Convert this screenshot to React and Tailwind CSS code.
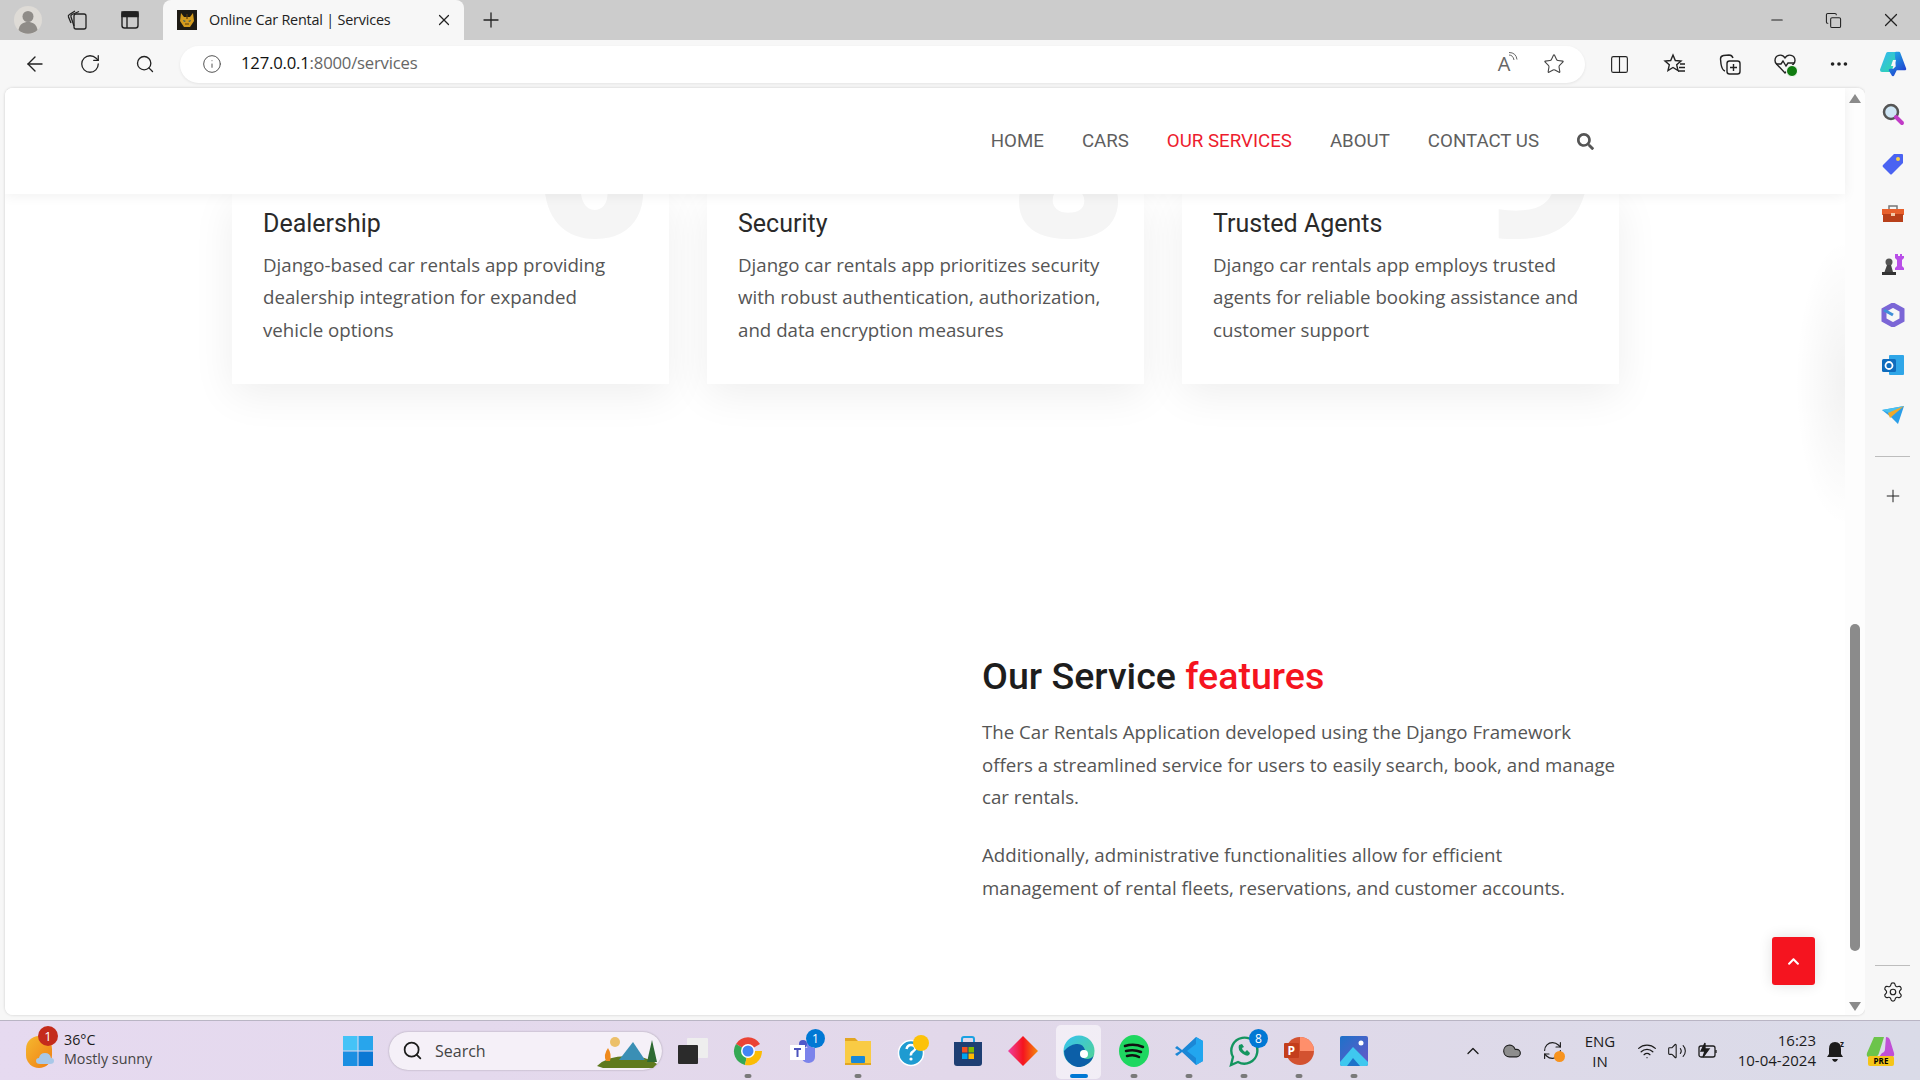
import {
  ArrowLeft, RotateCw, Search, Info, Star, X, Plus, Minus, Copy, ChevronUp, Settings,
  Wifi, Volume2, Cloud, RefreshCw, Columns2, Ellipsis,
} from "lucide-react"
import { FaSearch, FaChevronUp } from "react-icons/fa"

const navItems = ["HOME", "CARS", "OUR SERVICES", "ABOUT", "CONTACT US"]

const cards = [
  {
    title: "Dealership",
    digit: "6",
    digitClass: "right-[20px]",
    text: "Django-based car rentals app providing dealership integration for expanded vehicle options",
  },
  {
    title: "Security",
    digit: "8",
    digitClass: "right-[20px]",
    text: "Django car rentals app prioritizes security with robust authentication, authorization, and data encryption measures",
  },
  {
    title: "Trusted Agents",
    digit: "9",
    digitClass: "right-[24px]",
    text: "Django car rentals app employs trusted agents for reliable booking assistance and customer support",
  },
]

function Favicon() {
  return (
    <svg width="20" height="20" viewBox="0 0 20 20">
      <rect width="20" height="20" fill="#1d1a14" />
      <path d="M4 3l3 4h6l3-4 1 8-4 6H7l-4-6z" fill="#d39a1d" />
      <path d="M6 10l3 1-2 1zM14 10l-3 1 2 1z" fill="#27566b" />
      <path d="M10 4v5M8 14h4" stroke="#5a3a0c" strokeWidth="1.2" />
    </svg>
  )
}

function TabStripIcons() {
  return (
    <>
      <div className="w-[55px] flex justify-center">
        <svg width="28" height="28" viewBox="0 0 28 28">
          <circle cx="14" cy="14" r="14" fill="#dedbd6" />
          <circle cx="14" cy="10.5" r="5.5" fill="#8f8c88" />
          <path d="M4.5 24c1-6 5-8 9.500-8s8.500 2 9.500 8a14 14 0 0 1-19 0z" fill="#8f8c88" />
        </svg>
      </div>
      <div className="w-[44px] flex justify-center">
        <svg width="22" height="22" viewBox="0 0 22 22" fill="none" stroke="#222" strokeWidth="1.3">
          <rect x="8" y="5" width="12" height="15" rx="2" />
          <path d="M8 17l-3-9a2 2 0 0 1 1-2.500l7-3M5 14L2.500 8a2 2 0 0 1 1-2.500L9 2" />
        </svg>
      </div>
      <div className="w-[62px] flex justify-center">
        <svg width="20" height="20" viewBox="0 0 20 20" fill="none" stroke="#222" strokeWidth="1.4">
          <rect x="2" y="2" width="16" height="16" rx="2.500" />
          <path d="M7 6.500V18" />
          <path d="M2 2h16v4.500H2z" fill="#222" />
        </svg>
      </div>
    </>
  )
}

function CopilotIcon({ size = 30 }) {
  return (
    <svg width={size} height={size} viewBox="0 0 30 30" strokeLinejoin="round">
      <defs>
        <linearGradient id="cpA" x1="0" y1="0" x2="1" y2="1">
          <stop offset="0" stopColor="#35b9f0" />
          <stop offset="1" stopColor="#2fd8a8" />
        </linearGradient>
        <linearGradient id="cpB" x1="0" y1="0" x2="0.6" y2="1">
          <stop offset="0" stopColor="#1fb0e8" />
          <stop offset="1" stopColor="#2146d0" />
        </linearGradient>
      </defs>
      <path d="M10 5h7l-5 16H4z" fill="url(#cpA)" stroke="url(#cpA)" strokeWidth="4" />
      <path d="M18 4h3l6 16h-9l-3 6-3-5h4l3-3z" fill="url(#cpB)" stroke="url(#cpB)" strokeWidth="2.500" />
      <path d="M15 11h3l-2 6h-3z" fill="#f7f7f7" />
    </svg>
  )
}

function Toolbar() {
  return (
    <div className="h-[48px] bg-[#f7f7f7] flex items-center pl-[7px] text-[#222]">
      <div className="w-[55px] flex justify-center"><ArrowLeft size={24} strokeWidth={1.4} /></div>
      <div className="w-[56px] flex justify-center"><RotateCw size={22} strokeWidth={1.4} /></div>
      <div className="w-[54px] flex justify-center"><Search size={20} strokeWidth={1.6} /></div>
      <div className="w-[1405px] ml-[8px] h-[37px] rounded-full bg-white shadow-[0_1px_3px_rgba(0,0,0,0.08)] flex items-center pl-[22px] pr-[20px]">
        <Info size={20} strokeWidth={1.2} className="text-[#555]" />
        <div className="ml-[19px] -mt-[2px] text-[16.700px] leading-none font-['Open_Sans',sans-serif] tracking-[-0.2px]">
          <span className="text-[#111]">127.0.0.1</span>
          <span className="text-[#666]">:8000/services</span>
        </div>
        <div className="ml-auto flex items-center gap-[28px]">
          <div className="relative text-[20px] leading-none text-[#666] font-['Open_Sans',sans-serif] w-[22px] text-center">
            A
            <svg className="absolute -top-[2px] -right-[3px]" width="10" height="10" viewBox="0 0 10 10" fill="none" stroke="#666">
              <path d="M1 3q4 0 5 5M1 0.500q7 0 8 7" />
            </svg>
          </div>
          <Star size={22} strokeWidth={1.2} className="text-[#444]" />
        </div>
      </div>
      <div className="flex items-center ml-[7px]">
        <div className="w-[55px] flex justify-center"><Columns2 size={21} strokeWidth={1.3} /></div>
        <div className="w-[55px] flex justify-center">
          <svg width="24" height="24" viewBox="0 0 24 24" fill="none" stroke="#222" strokeWidth="1.4">
            <path d="M10 3l2.300 5.500 5.700.500-4.300 3.800 1.300 5.700L10 15.500 5 18.500l1.300-5.700L2 9l5.700-.500z" />
            <path d="M17 12h5M16 15.500h6M15 19h7" />
          </svg>
        </div>
        <div className="w-[55px] flex justify-center">
          <svg width="24" height="24" viewBox="0 0 24 24" fill="none" stroke="#222" strokeWidth="1.4">
            <rect x="9" y="9" width="13" height="13" rx="2.500" />
            <path d="M15.500 12v7M12 15.500h7M7 19Q4 18 3 12L2.500 7q0-3 3-3.500L11 3q3 0 4 3" />
          </svg>
        </div>
        <div className="w-[55px] flex justify-center relative">
          <svg width="24" height="24" viewBox="0 0 24 24" fill="none" stroke="#222" strokeWidth="1.4">
            <path d="M12 6C9 1 2 3 2 8.500q0 2 1.500 3.500L12 21l8.500-9q1.500-1.500 1.500-3.500C22 3 15 1 12 6z" />
            <path d="M3 12h5l2-3 3 5 2-3h6" />
          </svg>
          <div className="absolute left-[29px] top-[13px] w-[12px] h-[12px] rounded-full bg-[#107c10] border border-white" />
        </div>
        <div className="w-[54px] flex justify-center"><Ellipsis size={22} strokeWidth={2} /></div>
        <div className="w-[54px] flex justify-center"><CopilotIcon /></div>
      </div>
    </div>
  )
}

function ScrollBar() {
  return (
    <div className="w-[20px] flex flex-col items-center pt-[6px] pb-[4px] bg-[#fdfdfd]">
      <div className="w-0 h-0 border-x-[6px] border-x-transparent border-b-[9px] border-b-[#8b8b8b]" />
      <div className="w-[10px] h-[327px] mt-[521px] rounded-full bg-[#8b8b8b] -ml-[1px]" />
      <div className="mt-auto w-0 h-0 border-x-[6px] border-x-transparent border-t-[9px] border-t-[#8b8b8b]" />
    </div>
  )
}

function ServiceCard({ card }) {
  return (
    <div className="relative overflow-hidden bg-white pl-[31px] pr-[31px] pt-[15px] pb-[38px]">
      <div className={`absolute -top-[125px] ${card.digitClass} text-[190px] leading-none font-extrabold text-[#f5f5f5] font-['Open_Sans',sans-serif]`}>
        {card.digit}
      </div>
      <h3 className="relative text-[25px] leading-[29px] text-[#2a2a2a] font-['Roboto',sans-serif] font-normal">{card.title}</h3>
      <p className="relative mt-[11px] text-[18.700px] leading-[32.4px] text-[#555] font-['Open_Sans',sans-serif]">{card.text}</p>
    </div>
  )
}

function Page() {
  return (
    <div className="flex-1 min-w-0 flex flex-col bg-white relative">
      <header className="relative z-10 h-[106px] bg-white shadow-[0_2px_12px_rgba(0,0,0,0.06)] flex justify-end pt-[41px] pr-[251px]">
        <nav className="flex items-start gap-[38px] font-['Roboto',sans-serif] text-[18.700px] leading-[24px] text-[#5f5f5f]">
          {navItems.map((item) => (
            <a key={item} className={item === "OUR SERVICES" ? "text-[#ed1c2e]" : ""}>{item}</a>
          ))}
          <FaSearch size={17} className="mt-[4px] text-[#555]" />
        </nav>
      </header>

      <main className="flex-1 overflow-hidden pl-[227px] pr-[226px]">
        <div className="grid grid-cols-[437px_437px_437px] gap-[38px]">
          {cards.map((card) => (
            <div key={card.title} className="shadow-[0_10px_40px_rgba(0,0,0,0.07)]">
              <ServiceCard card={card} />
            </div>
          ))}
        </div>

        <section className="mt-[270px] ml-[750px] w-[640px]">
          <h2 className="text-[37.600px] leading-[44px] font-medium text-[#1d1d1d] font-['Roboto',sans-serif]">
            Our Service <span className="text-[#f5141f]">features</span>
          </h2>
          <p className="mt-[18px] text-[18.700px] leading-[32.4px] text-[#555] font-['Open_Sans',sans-serif]">
            The Car Rentals Application developed using the Django Framework offers a streamlined service for users to easily search, book, and manage car rentals.
          </p>
          <p className="mt-[26px] text-[18.700px] leading-[32.4px] text-[#555] font-['Open_Sans',sans-serif]">
            Additionally, administrative functionalities allow for efficient management of rental fleets, reservations, and customer accounts.
          </p>
        </section>
      </main>

      {/* faint shadow bleeding in next to the scrollbar */}
      <div className="absolute right-0 top-[150px] w-[50px] h-[290px] bg-[radial-gradient(ellipse_at_right,rgba(0,0,0,0.05),transparent_70%)]" />

      <button className="absolute left-[1767px] top-[849px] w-[43px] h-[48px] rounded-[3px] bg-[#f5141f] flex items-center justify-center shadow-[0_0_14px_rgba(0,0,0,0.12)]">
        <FaChevronUp size={13} className="text-white" />
      </button>
    </div>
  )
}

function SideBar() {
  return (
    <div className="w-[55px] bg-[#f7f7f7] flex flex-col items-center pt-[1px] pb-[17px]">
      <div className="h-[50px] flex items-center">
        <svg width="24" height="24" viewBox="0 0 24 24">
          <circle cx="10" cy="10" r="7" fill="#cfe6f5" stroke="#555" strokeWidth="2.500" />
          <path d="M15 15l6 6" stroke="#c13bc7" strokeWidth="4" strokeLinecap="round" />
        </svg>
      </div>
      <div className="h-[50px] flex items-center">
        <svg width="24" height="24" viewBox="0 0 24 24">
          <path d="M13 2h8q1 0 1 1v8L11 22q-1 1-2 0l-7-7q-1-1 0-2z" fill="#4a63f2" />
          <circle cx="17" cy="7" r="2" fill="#f7d04a" />
        </svg>
      </div>
      <div className="h-[50px] flex items-center">
        <svg width="24" height="24" viewBox="0 0 24 24">
          <path d="M8 7V4h8v3" fill="none" stroke="#777" strokeWidth="1.500" />
          <rect x="1" y="7" width="22" height="6" fill="#e8602c" />
          <rect x="2" y="12" width="20" height="8" fill="#b8401a" />
          <rect x="10" y="11" width="4" height="3" fill="#f3c9a8" />
        </svg>
      </div>
      <div className="h-[50px] flex items-center">
        <svg width="24" height="24" viewBox="0 0 24 24">
          <path d="M15 2h2v2h2V2h2v2h2v2l-2 2v6l2 2v2H14v-2l2-2V8l-2-2V2z" fill="#b94fe8" />
          <circle cx="8" cy="10" r="3.500" fill="#555" />
          <path d="M6 13h4l2 7H3.500z" fill="#444" />
          <rect x="1" y="20" width="14" height="3" fill="#333" />
        </svg>
      </div>
      <div className="h-[51px] flex items-center">
        <svg width="24" height="24" viewBox="0 0 24 24" fill="none">
          <path d="M12 2l9 5v10l-9 5-9-5V7z" stroke="#7b66d6" strokeWidth="5" />
          <path d="M3 7l9 5" stroke="#3f8fd8" strokeWidth="3" />
        </svg>
      </div>
      <div className="h-[50px] flex items-center">
        <svg width="24" height="24" viewBox="0 0 24 24">
          <rect x="8" y="2" width="15" height="20" rx="1" fill="#2fa6e8" />
          <rect x="1" y="6" width="14" height="13" rx="1.500" fill="#0f6cbd" />
          <circle cx="8" cy="12.500" r="3.500" fill="none" stroke="#fff" strokeWidth="1.800" />
        </svg>
      </div>
      <div className="h-[50px] flex items-center">
        <svg width="24" height="20" viewBox="0 0 24 20">
          <path d="M1 5l22-4-6 18-6-6z" fill="#2b9ee8" />
          <path d="M1 5l22-4-13 8z" fill="#49c1ef" />
          <path d="M7 8L23 1 9 13z" fill="#f0a92a" />
        </svg>
      </div>
      <div className="w-[35px] h-px bg-[#bdbdbd] mt-[16px]" />
      <Plus size={20} strokeWidth={1.2} className="mt-[29px] text-[#222]" />
      <div className="mt-auto w-[35px] h-px bg-[#bdbdbd]" />
      <Settings size={22} strokeWidth={1.3} className="mt-[15px] text-[#222]" />
    </div>
  )
}

function Dot() {
  return <div className="absolute bottom-[2px] left-1/2 -translate-x-1/2 w-[7px] h-[4px] rounded-full bg-[#7a7a7a]" />
}

function Badge({ children, className }) {
  return (
    <div className={`absolute w-[19px] h-[19px] rounded-full text-white text-[12px] leading-[19px] text-center font-['Open_Sans',sans-serif] ${className}`}>
      {children}
    </div>
  )
}

function TaskApps() {
  return (
    <div className="flex ml-[3px]">
      <div className="relative w-[55px] flex items-center justify-center">
        <svg width="30" height="26" viewBox="0 0 30 26">
          <rect x="9" width="21" height="20" rx="1" fill="#eee" />
          <rect y="7" width="20" height="19" rx="1" fill="#2b2b2b" />
        </svg>
      </div>
      <div className="relative w-[55px] flex items-center justify-center">
        <svg width="30" height="30" viewBox="0 0 30 30">
          <path d="M15 15L3 8a14 14 0 0 1 24 0z" fill="#ea4335" />
          <path d="M15 15L3 8a14 14 0 0 0 9 21z" fill="#34a853" />
          <path d="M15 15h14a14 14 0 0 1-17 14z" fill="#fbbc05" />
          <circle cx="15" cy="15" r="7" fill="#fff" />
          <circle cx="15" cy="15" r="5.500" fill="#4285f4" />
        </svg>
        <Dot />
      </div>
      <div className="relative w-[55px] flex items-center justify-center">
        <svg width="30" height="30" viewBox="0 0 30 30">
          <circle cx="22" cy="9" r="3.500" fill="#7b83eb" />
          <path d="M14 12h13v9q0 5-6 6-5 0-7-4z" fill="#7b83eb" />
          <circle cx="15" cy="8" r="4" fill="#5059c9" />
          <rect x="2" y="9" width="15" height="15" fill="#fff" />
          <path d="M6 12h7v2h-2.500v7h-2v-7H6z" fill="#4b53bc" />
        </svg>
        <Badge className="bg-[#0078d4] top-[8px] right-[5px]">1</Badge>
      </div>
      <div className="relative w-[55px] flex items-center justify-center">
        <svg width="28" height="32" viewBox="0 0 28 32">
          <path d="M1 3h10l3 3h-13z" fill="#e2a622" />
          <rect x="1" y="6" width="26" height="24" fill="#f9cb44" />
          <rect x="7" y="21" width="14" height="7" rx="1" fill="#1888d8" />
          <rect x="1" y="28" width="26" height="2" fill="#e2a622" />
        </svg>
        <Dot />
      </div>
      <div className="relative w-[55px] flex items-center justify-center">
        <svg width="34" height="34" viewBox="0 0 34 34">
          <circle cx="15" cy="19" r="12.500" fill="#1e9bd1" stroke="#fff" strokeWidth="1.500" />
          <path d="M10.500 15q1-4 4.500-4t4.500 3q0 2-2.500 3.500t-2 4" fill="none" stroke="#fff" strokeWidth="2.500" />
          <circle cx="15" cy="25" r="1.600" fill="#fff" />
          <circle cx="25" cy="9" r="8" fill="#fcc20a" />
        </svg>
      </div>
      <div className="relative w-[55px] flex items-center justify-center">
        <svg width="30" height="32" viewBox="0 0 30 32">
          <path d="M9 8V4q0-2 2-2h8q2 0 2 2v4" fill="none" stroke="#1ba1e2" strokeWidth="2" />
          <path d="M1 7h28v21q0 3-3 3H4q-3 0-3-3z" fill="#1e3f73" />
          <rect x="9" y="12" width="5.500" height="5.500" fill="#f25022" />
          <rect x="15.500" y="12" width="5.500" height="5.500" fill="#7fba00" />
          <rect x="9" y="18.500" width="5.500" height="5.500" fill="#00a4ef" />
          <rect x="15.500" y="18.500" width="5.500" height="5.500" fill="#ffb900" />
        </svg>
      </div>
      <div className="relative w-[56px] flex items-center justify-center">
        <svg width="30" height="30" viewBox="0 0 30 30">
          <defs>
            <linearGradient id="kite" x1="0" y1="0" x2="1" y2="0">
              <stop offset="0" stopColor="#ef3fa0" />
              <stop offset="0.5" stopColor="#f5141f" />
              <stop offset="1" stopColor="#f58a0a" />
            </linearGradient>
          </defs>
          <path d="M15 0l15 15-15 15L0 15z" fill="url(#kite)" />
        </svg>
      </div>
      <div className="relative w-[55px] flex items-center justify-center">
        <div className="absolute inset-x-[5px] top-[4px] bottom-[1px] bg-white/55 rounded-[5px]" />
        <svg className="relative" width="32" height="32" viewBox="0 0 32 32">
          <defs>
            <linearGradient id="edgeA" x1="0" y1="0" x2="1" y2="1">
              <stop offset="0" stopColor="#35c1f1" />
              <stop offset="1" stopColor="#54d58c" />
            </linearGradient>
          </defs>
          <circle cx="16" cy="16" r="15.500" fill="url(#edgeA)" />
          <path d="M31 18q0 5-6 6-7 0-8-6 0-3 5-3-2-7-9-6T1 16q0 9 8 14t17-2q4-3 5-10z" fill="#0c5fa8" />
          <circle cx="21" cy="19" r="4" fill="#fff" />
        </svg>
        <div className="absolute bottom-[2px] left-1/2 -translate-x-1/2 w-[18px] h-[4px] rounded-full bg-[#0078d4]" />
      </div>
      <div className="relative w-[55px] flex items-center justify-center">
        <svg width="30" height="32" viewBox="0 0 30 32" fill="none">
          <ellipse cx="15" cy="16" rx="15" ry="16" fill="#1ed760" />
          <path d="M6 11q9-3 18 1M7 16q8-2 15 1M8 21q7-2 12 1" stroke="#111" strokeWidth="2.500" strokeLinecap="round" />
        </svg>
        <Dot />
      </div>
      <div className="relative w-[55px] flex items-center justify-center">
        <svg width="30" height="30" viewBox="0 0 30 30">
          <path d="M22 1l7 4v20l-7 4L8 16l-5 4-2-2 5-3-5-3 2-2 5 4z" fill="#1b87d6" />
          <path d="M22 1l7 4v20l-7 4V8l-9 7 9 7z" fill="#22a6ef" />
        </svg>
        <Dot />
      </div>
      <div className="relative w-[55px] flex items-center justify-center">
        <svg width="30" height="32" viewBox="0 0 30 32" fill="none">
          <path d="M2 30l2-8A13 13 0 1 1 9 27z" stroke="#14955f" strokeWidth="2.400" />
          <path d="M10 10q-2 5 4 9t7-1l-3-3-2 2q-3-2-3-4l2-1-2-3z" fill="#14955f" />
        </svg>
        <Badge className="bg-[#0078d4] top-[8px] right-[3px]">8</Badge>
        <Dot />
      </div>
      <div className="relative w-[55px] flex items-center justify-center">
        <svg width="30" height="30" viewBox="0 0 30 30">
          <circle cx="16" cy="15" r="14" fill="#d35230" />
          <path d="M16 1a14 14 0 0 1 14 14H16z" fill="#ff8f6b" />
          <rect y="7" width="15" height="15" rx="1" fill="#c43e1c" />
          <text x="3.500" y="19" fontSize="12" fontWeight="700" fill="#fff" fontFamily="Open Sans, sans-serif">P</text>
        </svg>
        <Dot />
      </div>
      <div className="relative w-[55px] flex items-center justify-center">
        <svg width="28" height="30" viewBox="0 0 28 30">
          <defs>
            <linearGradient id="photo" x1="0" y1="0" x2="1" y2="1">
              <stop offset="0" stopColor="#1d72c9" />
              <stop offset="1" stopColor="#6a57c8" />
            </linearGradient>
          </defs>
          <rect width="28" height="30" rx="2" fill="url(#photo)" />
          <path d="M0 26l13-15 15 15v2q0 2-2 2H2q-2 0-2-2z" fill="#3fc8ef" />
          <path d="M7 30l6-8 7 8z" fill="#1d72c9" />
          <circle cx="21" cy="7" r="2.500" fill="#fff" />
        </svg>
        <Dot />
      </div>
    </div>
  )
}

function Taskbar() {
  return (
    <div className="h-[60px] border-t border-[#b9b5c4] bg-gradient-to-r from-[#e6daf0] via-[#e2d8ea] to-[#dadbe8] flex items-stretch font-['Open_Sans',sans-serif] text-[#1c1c1c]">
      <div className="relative w-[343px] flex items-center pl-[26px]">
        <div className="relative w-[26px] h-[32px] rounded-full bg-gradient-to-br from-[#f4b92f] to-[#ef7d13] mt-[2px]">
          <svg className="absolute -right-[3px] bottom-[3px]" width="20" height="14" viewBox="0 0 20 14">
            <path d="M5 13q-4 0-4-3t3-3q1-5 6-5t6 5q3 0 3 3t-4 3z" fill="#a9c8e8" />
          </svg>
        </div>
        <div className="absolute left-[38px] top-[5px] w-[20px] h-[20px] rounded-full bg-[#c42b1c] text-white text-[13px] leading-[20px] text-center">1</div>
        <div className="ml-[12px] -mt-[4px] leading-[19px] text-[14.300px]">
          <div>36°C</div>
          <div className="text-[#444]">Mostly sunny</div>
        </div>
      </div>
      <div className="w-[30px] flex items-center">
        <svg width="30" height="30" viewBox="0 0 30 30">
          <rect width="14.500" height="14.500" fill="#45c3f7" />
          <rect x="15.500" width="14.500" height="14.500" fill="#28a5ec" />
          <rect y="15.500" width="14.500" height="14.500" fill="#1b8fe2" />
          <rect x="15.500" y="15.500" width="14.500" height="14.500" fill="#0a78d4" />
        </svg>
      </div>
      <div className="ml-[16px] my-auto w-[273px] h-[38px] rounded-full bg-[#f5f0f8] shadow-[0_0_2px_rgba(0,0,0,0.3)] flex items-center pl-[13px] relative">
        <Search size={21} strokeWidth={2} className="text-[#1c1c1c]" />
        <span className="ml-[12px] text-[16px] text-[#444]">Search</span>
        <svg className="ml-auto mr-[3px]" width="62" height="34" viewBox="0 0 62 34">
          <circle cx="18" cy="8" r="5" fill="#ecc06a" />
          <path d="M0 32q10-10 30-10t30 8l-4 4H6z" fill="#5f7a1e" />
          <path d="M22 26L36 8l12 18z" fill="#3a8fb5" />
          <path d="M50 28l5-22 5 22z" fill="#2f6a33" />
          <path d="M9 27q-3-6 2-13 4 6 2 13z" fill="#ef8a1d" />
        </svg>
      </div>
      <TaskApps />
      <div className="flex-1 relative flex items-center">
        <ChevronUp size={20} strokeWidth={1.6} className="ml-[82px]" />
        <Cloud size={20} strokeWidth={1.3} fill="#8d8d8d" className="ml-[19px]" />
        <div className="relative ml-[20px]">
          <RefreshCw size={21} strokeWidth={1.3} />
          <div className="absolute right-[-2px] bottom-[-1px] w-[11px] h-[11px] rounded-full bg-[#f7931e]" />
        </div>
        <div className="ml-[20px] w-[34px] text-[15px] leading-[20px] text-center">ENG<br />IN</div>
        <Wifi size={20} strokeWidth={1.5} className="ml-[20px]" />
        <Volume2 size={20} strokeWidth={1.3} className="ml-[10px]" />
        <svg className="ml-[11px]" width="20" height="20" viewBox="0 0 20 20" fill="none" stroke="#1c1c1c" strokeWidth="1.300">
          <rect x="1" y="5" width="16" height="11" rx="2" />
          <path d="M18 9v3" />
          <path d="M7 2L3 10h4l-2 6 6-8H7z" fill="#1c1c1c" />
        </svg>
        <div className="ml-auto -mt-[2px] text-right text-[15px] leading-[20px] w-[90px] mr-[10px]">
          <div>16:23</div>
          <div>10-04-2024</div>
        </div>
        <svg width="22" height="24" viewBox="0 0 22 24" fill="#1c1c1c">
          <path d="M9 3q6 0 6 7v5l2 3H1l2-3v-5q0-7 6-7zM6 20h6q-1 3-3 3t-3-3z" />
          <text x="14" y="8" fontSize="8" fontWeight="700" fontFamily="Open Sans, sans-serif">z</text>
        </svg>
        <div className="relative ml-[18px] mr-[24px] w-[30px] h-[30px]">
          <svg width="30" height="26" viewBox="0 0 30 26">
            <path d="M8 1h10l-5 16q-1 4-5 4H3Q0 21 1 17z" fill="#6cc44a" />
            <path d="M20 1q3 0 4 3l4 13q1 4-3 4H13l3-4q3-1 3-4z" fill="#c04fd6" />
          </svg>
          <div className="absolute left-[2px] bottom-0 w-[26px] h-[10px] bg-[#f5c518] rounded-[2px] text-[8px] leading-[10px] font-bold text-center text-black">PRE</div>
        </div>
      </div>
    </div>
  )
}

export default function App() {
  return (
    <div className="w-[1920px] h-[1080px] overflow-hidden flex flex-col bg-[#f7f7f7]">
      {/* tab strip */}
      <div className="h-[40px] bg-[#cccccc] flex items-center text-[#222]">
        <TabStripIcons />
        <div className="ml-[2px] w-[301px] h-[40px] self-end bg-[#f7f7f7] rounded-t-[8px] flex items-center pl-[14px] pr-[11px]">
          <Favicon />
          <span className="ml-[12px] text-[14.400px] text-[#222] font-['Open_Sans',sans-serif] tracking-[-0.2px]">Online Car Rental | Services</span>
          <X size={18} strokeWidth={1.6} className="ml-auto" />
        </div>
        <Plus size={24} strokeWidth={1.3} className="ml-[15px]" />
        <div className="ml-auto flex items-center">
          <div className="w-[56px] flex justify-center"><Minus size={18} strokeWidth={1.4} /></div>
          <div className="w-[57px] flex justify-center"><Copy size={17} strokeWidth={1.5} /></div>
          <div className="w-[58px] flex justify-center"><X size={22} strokeWidth={1.3} /></div>
        </div>
      </div>

      <Toolbar />

      {/* browser viewport + edge sidebar */}
      <div className="flex-1 min-h-0 flex">
        <div className="ml-[5px] mb-[5px] flex-1 min-w-0 flex rounded-[8px] overflow-hidden bg-white shadow-[0_0_3px_rgba(0,0,0,0.18)]">
          <Page />
          <ScrollBar />
        </div>
        <SideBar />
      </div>

      <Taskbar />
    </div>
  )
}
